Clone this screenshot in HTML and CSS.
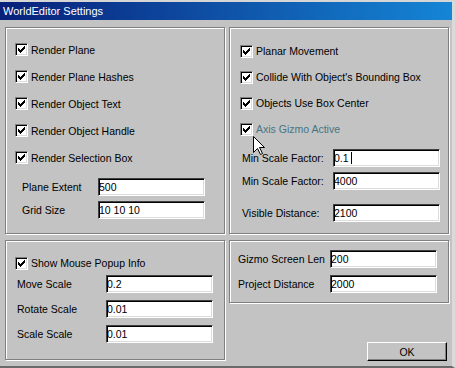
FILE: index.html
```html
<!DOCTYPE html>
<html lang="en">
<head>
  <meta charset="UTF-8">
  <title>WorldEditor Settings</title>
  <link rel="stylesheet" href="styles.css">
</head>
<body>
  <svg width="0" height="0" class="defs">
    <symbol id="tick" viewBox="0 0 7 7">
      <rect x="6" y="0" width="1" height="1"/>
      <rect x="5" y="1" width="2" height="1"/>
      <rect x="0" y="2" width="1" height="1"/>
      <rect x="4" y="2" width="3" height="1"/>
      <rect x="0" y="3" width="2" height="1"/>
      <rect x="3" y="3" width="3" height="1"/>
      <rect x="0" y="4" width="5" height="1"/>
      <rect x="1" y="5" width="3" height="1"/>
      <rect x="2" y="6" width="1" height="1"/>
    </symbol>
  </svg>

  <div class="window">
    <div class="titlebar">WorldEditor Settings</div>

    <div class="content">
      <!-- Left column -->
      <div class="col">
        <div class="panel panel-render">
          <label class="check-row"><span class="box"><svg><use href="#tick"/></svg></span>Render Plane</label>
          <label class="check-row"><span class="box"><svg><use href="#tick"/></svg></span>Render Plane Hashes</label>
          <label class="check-row"><span class="box"><svg><use href="#tick"/></svg></span>Render Object Text</label>
          <label class="check-row"><span class="box"><svg><use href="#tick"/></svg></span>Render Object Handle</label>
          <label class="check-row"><span class="box"><svg><use href="#tick"/></svg></span>Render Selection Box</label>
          <div class="fields">
            <div class="field-row"><label for="plane-extent">Plane Extent</label><input id="plane-extent" type="text" value="500"></div>
            <div class="field-row"><label for="grid-size">Grid Size</label><input id="grid-size" type="text" value="10 10 10"></div>
          </div>
        </div>

        <div class="panel panel-mouse">
          <label class="check-row"><span class="box"><svg><use href="#tick"/></svg></span>Show Mouse Popup Info</label>
          <div class="fields">
            <div class="field-row"><label for="move-scale">Move Scale</label><input id="move-scale" type="text" value="0.2"></div>
            <div class="field-row"><label for="rotate-scale">Rotate Scale</label><input id="rotate-scale" type="text" value="0.01"></div>
            <div class="field-row"><label for="scale-scale">Scale Scale</label><input id="scale-scale" type="text" value="0.01"></div>
          </div>
        </div>
      </div>

      <!-- Right column -->
      <div class="col">
        <div class="panel panel-gizmo">
          <label class="check-row"><span class="box"><svg><use href="#tick"/></svg></span>Planar Movement</label>
          <label class="check-row"><span class="box"><svg><use href="#tick"/></svg></span>Collide With Object's Bounding Box</label>
          <label class="check-row"><span class="box"><svg><use href="#tick"/></svg></span>Objects Use Box Center</label>
          <label class="check-row hot"><span class="box"><svg><use href="#tick"/></svg></span>Axis Gizmo Active</label>
          <div class="fields">
            <div class="field-row"><label for="min-scale">Min Scale Factor:</label><span class="focus-wrap"><input id="min-scale" type="text" value="0.1"><span class="caret"></span></span></div>
            <div class="field-row"><label for="max-scale">Min Scale Factor:</label><input id="max-scale" type="text" value="4000"></div>
            <div class="field-row spaced"><label for="visible-distance">Visible Distance:</label><input id="visible-distance" type="text" value="2100"></div>
          </div>
        </div>

        <div class="panel panel-screen">
          <div class="fields">
            <div class="field-row"><label for="gizmo-len">Gizmo Screen Len</label><input id="gizmo-len" type="text" value="200"></div>
            <div class="field-row"><label for="project-distance">Project Distance</label><input id="project-distance" type="text" value="2000"></div>
          </div>
        </div>

        <button class="ok-button">OK</button>
      </div>
    </div>

    <!-- mouse pointer over the dialog -->
    <svg class="pointer" width="13" height="20" viewBox="0 0 13 20">
      <polygon points="0.5,0.5 0.5,16.5 4.5,12.5 7.5,18.5 9.5,17.5 6.5,11.5 11.5,11.5" fill="#fff" stroke="#000" stroke-width="1"/>
    </svg>
  </div>
</body>
</html>
```

FILE: styles.css
```css
body {
  margin: 0;
  background: #c3c3c3;
}

.defs {
  position: absolute;
}

.window {
  position: relative;
  width: 455px;
  height: 368px;
  box-sizing: border-box;
  background: #c3c3c3;
  border-top: 2px solid #d6d6d6;
  border-right: 3px solid #dadada;
  border-bottom: 2px solid #6a6a6a;
  font-family: "Liberation Sans", Arial, sans-serif;
  font-size: 10.5px;
  color: #000;
}

.titlebar {
  height: 18px;
  line-height: 18px;
  padding-left: 3px;
  color: #fff;
  font-size: 11px;
  background: linear-gradient(to right, #08207a, #1585d5);
}

.content {
  display: grid;
  grid-template-columns: 220px 220px;
  column-gap: 4px;
  padding: 7px 0 0 5px;
}

.col {
  display: flex;
  flex-direction: column;
}

.panel {
  box-sizing: border-box;
  border: 1px solid #808080;
  box-shadow: inset 1px 1px #fff, 1px 1px #fff;
}

.check-row {
  display: flex;
  align-items: center;
  height: 27px;
}

.check-row.hot {
  color: #457585;
}

.box {
  width: 13px;
  height: 13px;
  box-sizing: border-box;
  margin-right: 3px;
  padding: 2px;
  background: #fff;
  border: 1px solid;
  border-color: #808080 #fff #fff #808080;
  box-shadow: inset 1px 1px #000, inset -1px -1px #dcdcdc;
}

.box svg {
  display: block;
  width: 7px;
  height: 7px;
  fill: #000;
  shape-rendering: crispEdges;
}

.fields {
  display: flex;
  flex-direction: column;
}

.field-row {
  display: flex;
  align-items: center;
  height: 18px;
}

input {
  width: 107px;
  height: 18px;
  box-sizing: border-box;
  margin: 0;
  padding: 0;
  font: inherit;
  color: #000;
  background: #fff;
  border: 1px solid;
  border-color: #404040 #fff #fff #404040;
  box-shadow: inset 1px 1px #000, inset -1px -1px #dcdcdc;
  outline: none;
}

.focus-wrap {
  position: relative;
  display: block;
}

.caret {
  position: absolute;
  left: 18px;
  top: 3px;
  width: 1px;
  height: 12px;
  background: #000;
}

/* left top: render options */
.panel-render {
  height: 207px;
  padding: 8px 0 0 9px;
}

.panel-render .fields {
  margin: 7px 0 0 7px;
  gap: 5px;
}

.panel-render .field-row label {
  width: 76px;
}

/* left bottom: mouse */
.panel-mouse {
  height: 120px;
  margin-top: 6px;
  padding: 13px 0 0 9px;
}

.panel-mouse .check-row {
  height: 18px;
}

.panel-mouse .fields {
  margin: 3px 0 0 2px;
  gap: 7px;
}

.panel-mouse .field-row label {
  width: 89px;
}

/* right top: gizmo */
.panel-gizmo {
  height: 207px;
  padding: 10px 0 0 10px;
}

.panel-gizmo .check-row {
  height: 26px;
}

.panel-gizmo .fields {
  margin: 7px 0 0 2px;
  gap: 5px;
}

.panel-gizmo .field-row label {
  width: 91px;
}

.panel-gizmo .field-row.spaced {
  margin-top: 9px;
}

/* right bottom: screen */
.panel-screen {
  height: 63px;
  margin-top: 6px;
  padding: 9px 0 0 8px;
}

.panel-screen .fields {
  gap: 7px;
}

.panel-screen .field-row label {
  width: 92px;
}

.ok-button {
  align-self: flex-end;
  width: 80px;
  height: 19px;
  margin: 39px 2px 0 0;
  padding: 0;
  font: inherit;
  color: #000;
  background: #c3c3c3;
  border: 1px solid;
  border-color: #fff #000 #000 #fff;
  box-shadow: inset -1px -1px #808080;
}

.pointer {
  position: absolute;
  left: 253px;
  top: 134px;
}
```
